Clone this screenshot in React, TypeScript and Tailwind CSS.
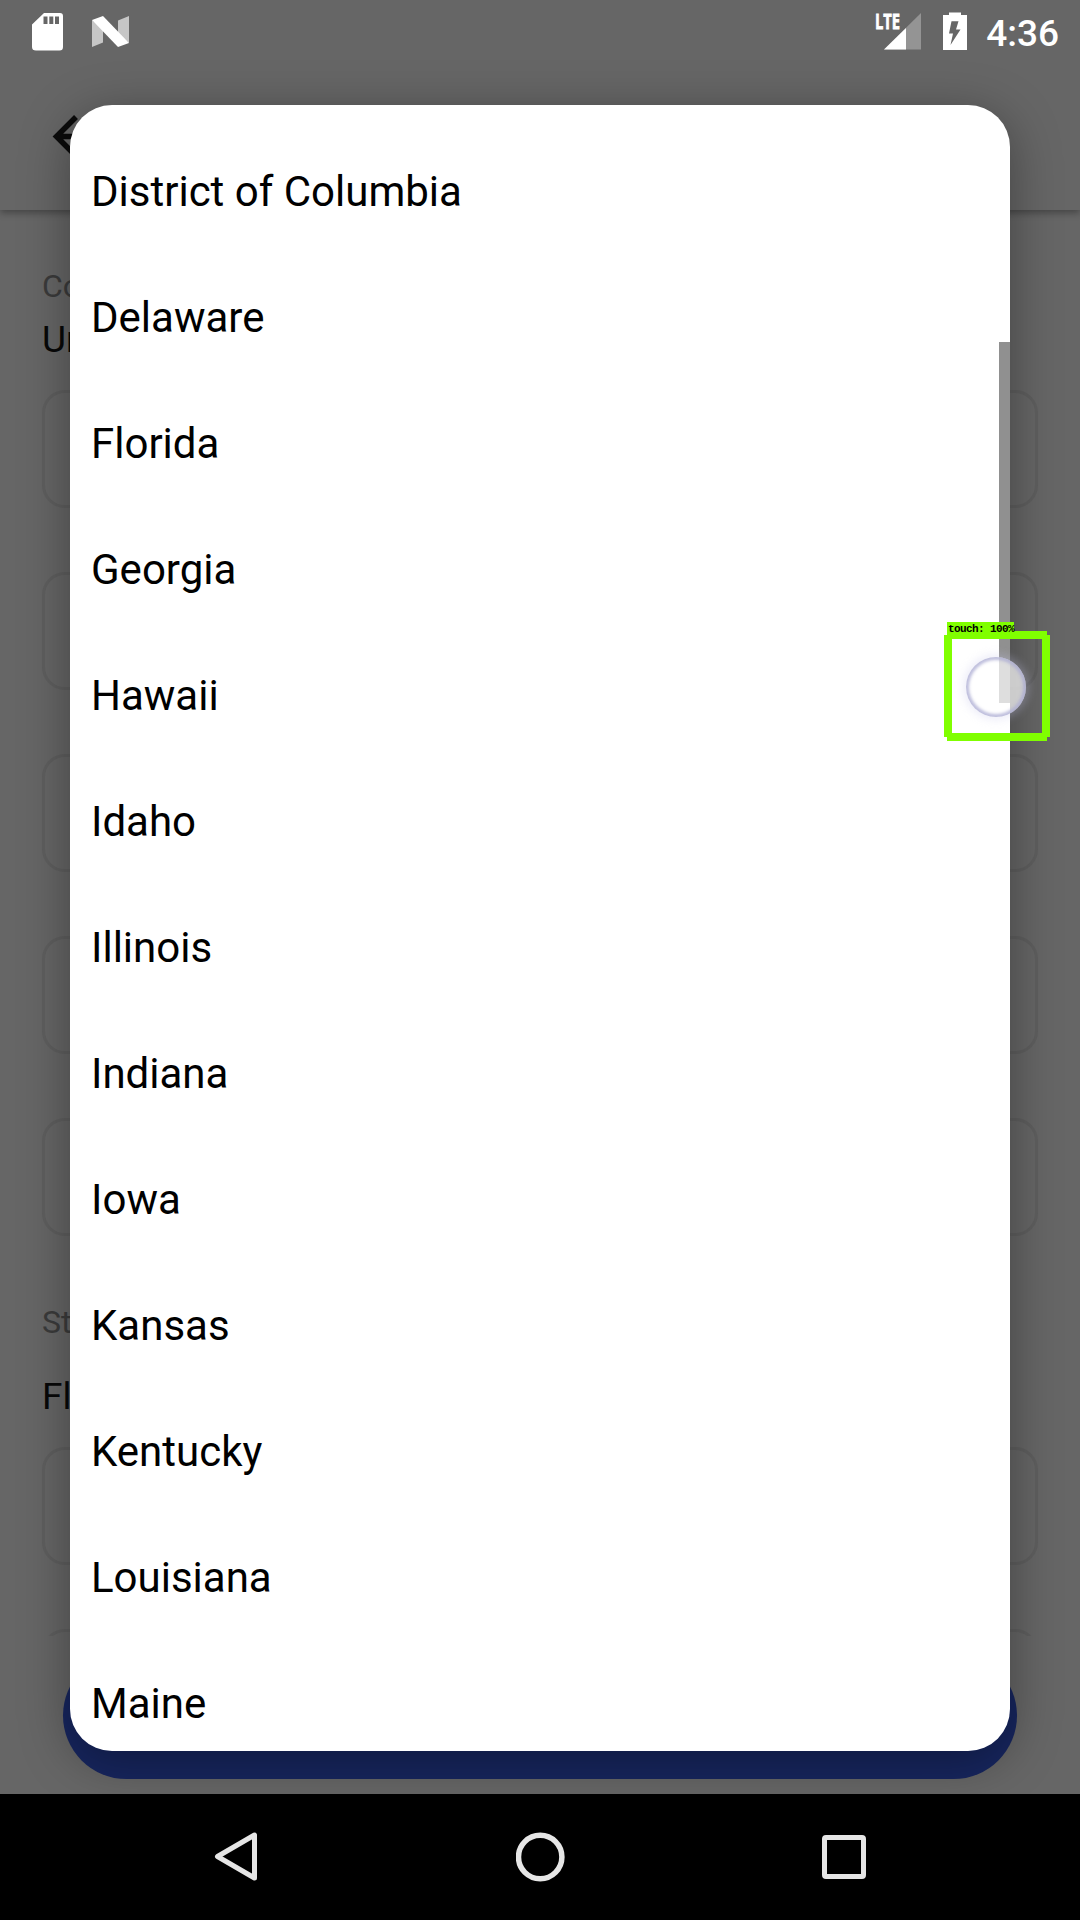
const states = [
  'District of Columbia', 'Delaware', 'Florida', 'Georgia', 'Hawaii', 'Idaho', 'Illinois',
  'Indiana', 'Iowa', 'Kansas', 'Kentucky', 'Louisiana', 'Maine',
];

function StatusBar() {
  return (
    <header className="flex h-[63px] items-start justify-between text-white">
      <div className="flex pl-8 pt-3">
        <svg width="31" height="39" viewBox="0 0 31 39">
          <path fillRule="evenodd" fill="#fff" d="M12 1H28Q31 1 31 4V35Q31 38.500 27.500 38.500H4Q0 38.500 0 35V12.500ZM11.500 4.500V12H15.500V4.500ZM17.300 4.500V12H21.300V4.500ZM23 4.500V12H27V4.500Z" />
        </svg>
        <svg className="ml-7" width="40" height="39" viewBox="0 0 40 39">
          <path d="M1 8L12 17V30.500L1 35ZM27 8.500L38 4V31L27 22Z" fill="#c6c6c6" />
          <path d="M1 8L12 4L38 31L27 35Z" fill="#fff" />
        </svg>
      </div>
      <div className="flex pr-[21px] pt-3">
        <svg width="47" height="39" viewBox="0 0 47 39">
          <path d="M46 1V37.500H9Z" fill="#949494" />
          <path d="M31 16V37.500H9Z" fill="#fff" />
          <text x="0" y="17" fill="#fff" stroke="#fff" strokeWidth="0.8" fontFamily="Open Sans" fontWeight="700" fontSize="22" textLength="25" lengthAdjust="spacingAndGlyphs">LTE</text>
        </svg>
        <svg className="ml-[21px]" width="24" height="39" viewBox="0 0 24 39">
          <path d="M6 0.500H18V3H24V38H0V3H6Z" fill="#fff" />
          <path d="M8.500 9.300H15.500L13 17.500H17.500L7.500 33L10 21.500H6Z" fill="#666" />
        </svg>
        <span className="ml-[19px] mt-[3px] text-[37px] font-medium leading-[37px]">4:36</span>
      </div>
    </header>
  );
}

function Field() {
  return <div className="h-[118px] w-full shrink-0 rounded-[23px] border-[3px] border-[#5f5f5f]" />;
}

export default function App() {
  return (
    <div className="relative flex h-[1920px] w-[1080px] flex-col overflow-hidden bg-[#666] font-['Roboto',sans-serif]">
      <div className="relative z-10 h-[210px] shrink-0 bg-[#666] shadow-[0_3px_7px_rgba(0,0,0,0.32)]">
        <StatusBar />
        <svg className="ml-[50px] mt-[50px]" width="52" height="48" viewBox="0 0 52 48" fill="none" stroke="#0b0b0b" strokeWidth="5.500">
          <path d="M26 4L6.500 23.500L26 43M7 23.500H50" />
        </svg>
      </div>

      <main className="flex h-[1426px] shrink-0 flex-col overflow-hidden px-[42px] pt-14">
        <p className="text-[32px] leading-10 text-[#3b3b3b]">Country</p>
        <p className="mt-[9px] text-[37px] leading-[50px] text-[#080808]">United States</p>
        <div className="mt-[25px] flex flex-col gap-16">
          <Field /><Field /><Field /><Field /><Field />
        </div>
        <p className="mt-[66px] text-[32px] leading-10 text-[#3b3b3b]">State</p>
        <p className="mt-[30px] text-[37px] leading-[50px] text-[#080808]">Florida</p>
        <div className="mt-[25px] flex flex-col gap-16">
          <Field /><Field />
        </div>
      </main>

      <footer className="h-[158px] shrink-0 px-[63px] pt-4">
        <div className="h-[127px] rounded-full bg-[#17265f]" />
      </footer>

      <div className="absolute left-[70px] top-[105px] z-20 h-[1646px] w-[940px] rounded-[42px] shadow-[0_10px_50px_rgba(0,0,0,0.36)]">
        <ul className="h-full overflow-hidden rounded-[42px] bg-white pt-[23px] text-[42px] text-black">
          {states.map((name) => (
            <li key={name} className="flex h-[126px] items-center px-[21px]">{name}</li>
          ))}
        </ul>
        <div className="absolute right-0 top-[237px] h-[361px] w-[11px] bg-[#909090]" />
      </div>

      <div className="absolute left-[966px] top-[657px] z-30 size-[60px] rounded-full bg-white/70 shadow-[0_0_9px_3px_rgba(200,200,235,0.3),inset_0_0_3px_3px_rgba(170,170,210,0.75)]" />
      <svg className="absolute left-[944px] top-[631px] z-30" width="106" height="110" viewBox="0 0 106 110" fill="#80ff00">
        <path fillRule="evenodd" d="M3 0H103V4H106V106H103V110H3V106H0V4H3ZM8 8V102H98V8Z" />
      </svg>
      <div className="absolute left-[947px] top-[622px] z-30 h-[13px] w-[67px] whitespace-nowrap bg-[#80ff00] pl-px font-['Liberation_Mono',monospace] text-[11px] font-bold leading-[14px] tracking-[-0.6px] text-black">touch: 100%</div>

      <nav className="relative z-30 flex h-[126px] items-center justify-between bg-black pl-[211px] pr-[210px]">
        <svg width="50" height="56" viewBox="0 0 50 56" fill="none" stroke="#e6e6e6" strokeWidth="5" strokeLinejoin="round">
          <path d="M43.500 6V49L6.500 27.500Z" />
        </svg>
        <svg width="50" height="50" viewBox="0 0 50 50" fill="none" stroke="#e6e6e6" strokeWidth="5.500">
          <circle cx="24.200" cy="25" r="21.700" />
        </svg>
        <svg width="50" height="50" viewBox="0 0 50 50" fill="none" stroke="#e6e6e6" strokeWidth="5">
          <rect x="4.500" y="5.500" width="39" height="39" rx="1.500" />
        </svg>
      </nav>
    </div>
  );
}
